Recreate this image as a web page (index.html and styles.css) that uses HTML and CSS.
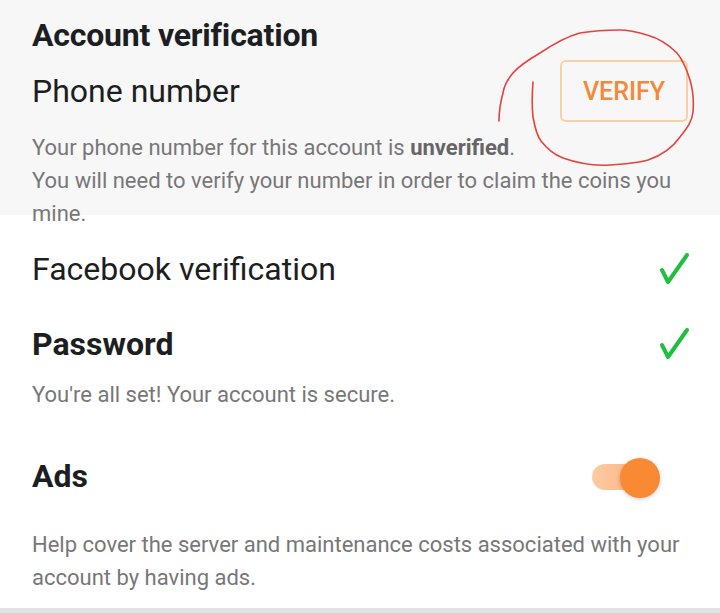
FILE: index.html
```html
<!DOCTYPE html>
<html>
<head>
<meta charset="utf-8">
<link rel="stylesheet" href="styles.css">
</head>
<body>
<div class="page">
  <section class="account">
    <h2 class="title">Account verification</h2>
    <div class="row phone-row">
      <span class="label">Phone number</span>
      <button class="verify">VERIFY</button>
    </div>
    <p class="desc">Your phone number for this account is <b>unverified</b>.<br>You will need to verify your number in order to claim the coins you mine.</p>
    <svg class="scribble" width="220" height="150" viewBox="480 25 220 150">
      <path d="M533 82 C532 95 532 108 533 117 C535 128 537 136 541 141 C548 150 555 155 563 158 C580 164 596 166 610 165 C625 164 638 163 648 160 C663 155 673 147 680 137 C687 128 692 122 693 112 C694 100 693 90 690 80 C686 67 682 59 677 53 C668 44 658 38 647 35 C637 32 628 30 620 30 C605 30 592 31 580 33 C565 37 552 45 540 53 C528 60 519 66 513 73 C507 80 504 86 503 93 C500 104 499 112 499 121" fill="none" stroke="#e5433b" stroke-width="1.6" stroke-linecap="round"/>
    </svg>
  </section>

  <div class="row fb-row">
    <span class="label">Facebook verification</span>
    <svg class="check" width="32" height="34" viewBox="0 0 32 34"><path d="M4 18 L10 30 L29 3" fill="none" stroke="#1fbf3f" stroke-width="4" stroke-linecap="round" stroke-linejoin="round"/></svg>
  </div>

  <div class="row pw-row">
    <span class="label bold">Password</span>
    <svg class="check" width="32" height="34" viewBox="0 0 32 34"><path d="M4 18 L10 30 L29 3" fill="none" stroke="#1fbf3f" stroke-width="4" stroke-linecap="round" stroke-linejoin="round"/></svg>
  </div>
  <p class="desc pw-desc">You're all set! Your account is secure.</p>

  <div class="row ads-row">
    <span class="label bold">Ads</span>
    <div class="toggle"><span class="track"></span><span class="thumb"></span></div>
  </div>
  <p class="desc ads-desc">Help cover the server and maintenance costs associated with your account by having ads.</p>
  <div class="bottom-line"></div>
</div>
</body>
</html>
```

FILE: styles.css
```css
html, body {
  margin: 0;
  padding: 0;
  background: #ffffff;
}
body {
  font-family: Roboto, "Noto Sans", sans-serif;
  width: 720px;
  height: 613px;
  overflow: hidden;
}
.page {
  display: flex;
  flex-direction: column;
}
.account {
  position: relative;
  background: #f7f7f7;
  height: 215px;
  padding: 15px 30px 0 32px;
  box-sizing: border-box;
}
.title {
  margin: 0;
  font-size: 32px;
  line-height: 40px;
  font-weight: 700;
  color: #1c1e21;
  letter-spacing: -0.2px;
}
.row {
  display: flex;
  align-items: center;
  justify-content: space-between;
  height: 50px;
}
.phone-row {
  margin-top: 5px;
  height: 62px;
}
.label {
  font-size: 32px;
  color: #1c1e21;
  font-weight: 400;
}
.label.bold {
  font-weight: 700;
  font-size: 32px;
}
.verify {
  height: 62px;
  width: 128px;
  margin-right: 2px;
  border: 2px solid #f9cfa8;
  border-radius: 6px;
  background: transparent;
  color: #f28a3c;
  font-family: Roboto, sans-serif;
  font-size: 25px;
  font-weight: 500;
  padding: 0;
}
.desc {
  margin: 9px 0 0 0;
  font-size: 22px;
  line-height: 33px;
  color: #777777;
}
.desc b {
  color: #666666;
  font-weight: 700;
}
.scribble {
  position: absolute;
  left: 480px;
  top: 25px;
}
.fb-row, .pw-row, .ads-row, .pw-desc, .ads-desc {
  padding: 0 30px 0 32px;
}
.fb-row {
  margin-top: 29px;
}
.pw-row {
  margin-top: 25px;
}
.pw-desc {
  margin-top: 9px;
}
.ads-row {
  margin-top: 40px;
}
.toggle {
  position: relative;
  width: 70px;
  height: 40px;
  margin-right: 30px;
  margin-top: 4px;
}
.track {
  position: absolute;
  left: 2px;
  top: 6px;
  width: 58px;
  height: 26px;
  border-radius: 13px;
  background: linear-gradient(90deg, #fdcaa3, #fcb07a);
}
.thumb {
  position: absolute;
  left: 30px;
  top: 0;
  width: 40px;
  height: 40px;
  border-radius: 50%;
  background: #f98a33;
  box-shadow: 0 1px 4px rgba(0,0,0,0.2);
}
.ads-desc {
  margin-top: 27px;
}
.bottom-line {
  margin-top: 14px;
  height: 6px;
  background: #e2e2e2;
}
```
